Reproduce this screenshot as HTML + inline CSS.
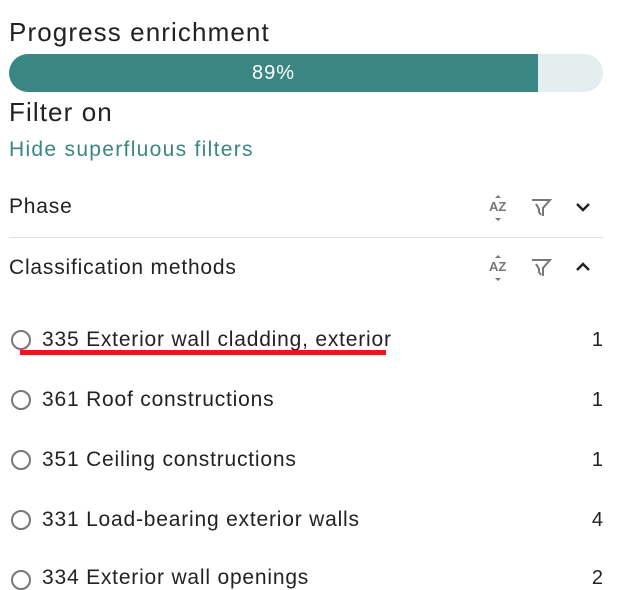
<!DOCTYPE html>
<html><head><meta charset="utf-8"><style>
body{margin:0;width:630px;height:585px;background:#fff;font-family:"Liberation Sans",sans-serif;color:#222;position:relative;overflow:hidden}
.a{position:absolute;white-space:nowrap}
.h{font-size:26px;left:9px;letter-spacing:1.1px}
.bar{left:9px;top:54px;width:594px;height:38px;border-radius:19px;background:#e4eeee;overflow:hidden}
.fill{position:absolute;left:0;top:0;width:529px;height:38px;background:#3a8682;color:#fff;font-size:20px;text-align:center;line-height:38px;letter-spacing:1px}
.t{font-size:21px;left:9px;letter-spacing:0.8px}
.r{font-size:21px;left:42px;letter-spacing:0.8px}
.n{font-size:20px;right:27px}
.c{position:absolute;left:11px;width:20px;height:20px;border:2px solid #777;border-radius:50%;box-sizing:border-box}
.az{font-size:13px;font-weight:bold;color:#777;left:489px}
</style></head><body>
<div class="a h" style="top:17px">Progress enrichment</div>
<div class="a bar"><div class="fill">89%</div></div>
<div class="a h" style="top:97px">Filter on</div>
<div class="a t" style="top:138px;color:#3a8682;letter-spacing:1.3px">Hide superfluous filters</div>
<div class="a t" style="top:195px">Phase</div>
<div class="a" style="left:9px;top:237px;width:594px;height:1px;background:#e2e2e2"></div>
<div class="a t" style="top:256px">Classification methods</div>
<div class="a az" style="top:199px">AZ</div>
<div class="a az" style="top:259px">AZ</div>
<svg class="a" style="left:493px;top:194px" width="10" height="28" viewBox="0 0 10 28" fill="#777"><path d="M2 4l3-3 3 3zM2 24l3 3 3-3z"/></svg>
<svg class="a" style="left:493px;top:254px" width="10" height="28" viewBox="0 0 10 28" fill="#777"><path d="M2 4l3-3 3 3zM2 24l3 3 3-3z"/></svg>
<svg class="a" style="left:530px;top:197px" width="22" height="22" viewBox="0 0 22 22" fill="none" stroke="#777" stroke-width="2"><path d="M2 3h18l-7 8v8M6 7l3 5v3l2 3"/></svg>
<svg class="a" style="left:530px;top:257px" width="22" height="22" viewBox="0 0 22 22" fill="none" stroke="#777" stroke-width="2"><path d="M2 3h18l-7 8v8M6 7l3 5v3l2 3"/></svg>
<svg class="a" style="left:574px;top:200px" width="18" height="14" viewBox="0 0 18 14" fill="none" stroke="#222" stroke-width="2.5"><path d="M3 4l6 6 6-6"/></svg>
<svg class="a" style="left:574px;top:260px" width="18" height="14" viewBox="0 0 18 14" fill="none" stroke="#222" stroke-width="2.5"><path d="M3 10l6-6 6 6"/></svg>

<div class="c" style="top:330px"></div><div class="a r" style="top:328px">335 Exterior wall cladding, exterior</div><div class="a n" style="top:329px">1</div>
<div class="a" style="left:20px;top:350px;width:366px;height:5px;background:#e31b1b"></div>
<div class="c" style="top:390px"></div><div class="a r" style="top:388px">361 Roof constructions</div><div class="a n" style="top:389px">1</div>
<div class="c" style="top:450px"></div><div class="a r" style="top:448px">351 Ceiling constructions</div><div class="a n" style="top:449px">1</div>
<div class="c" style="top:510px"></div><div class="a r" style="top:508px">331 Load-bearing exterior walls</div><div class="a n" style="top:509px">4</div>
<div class="c" style="top:570px"></div><div class="a r" style="top:566px">334 Exterior wall openings</div><div class="a n" style="top:567px">2</div>
</body></html>
